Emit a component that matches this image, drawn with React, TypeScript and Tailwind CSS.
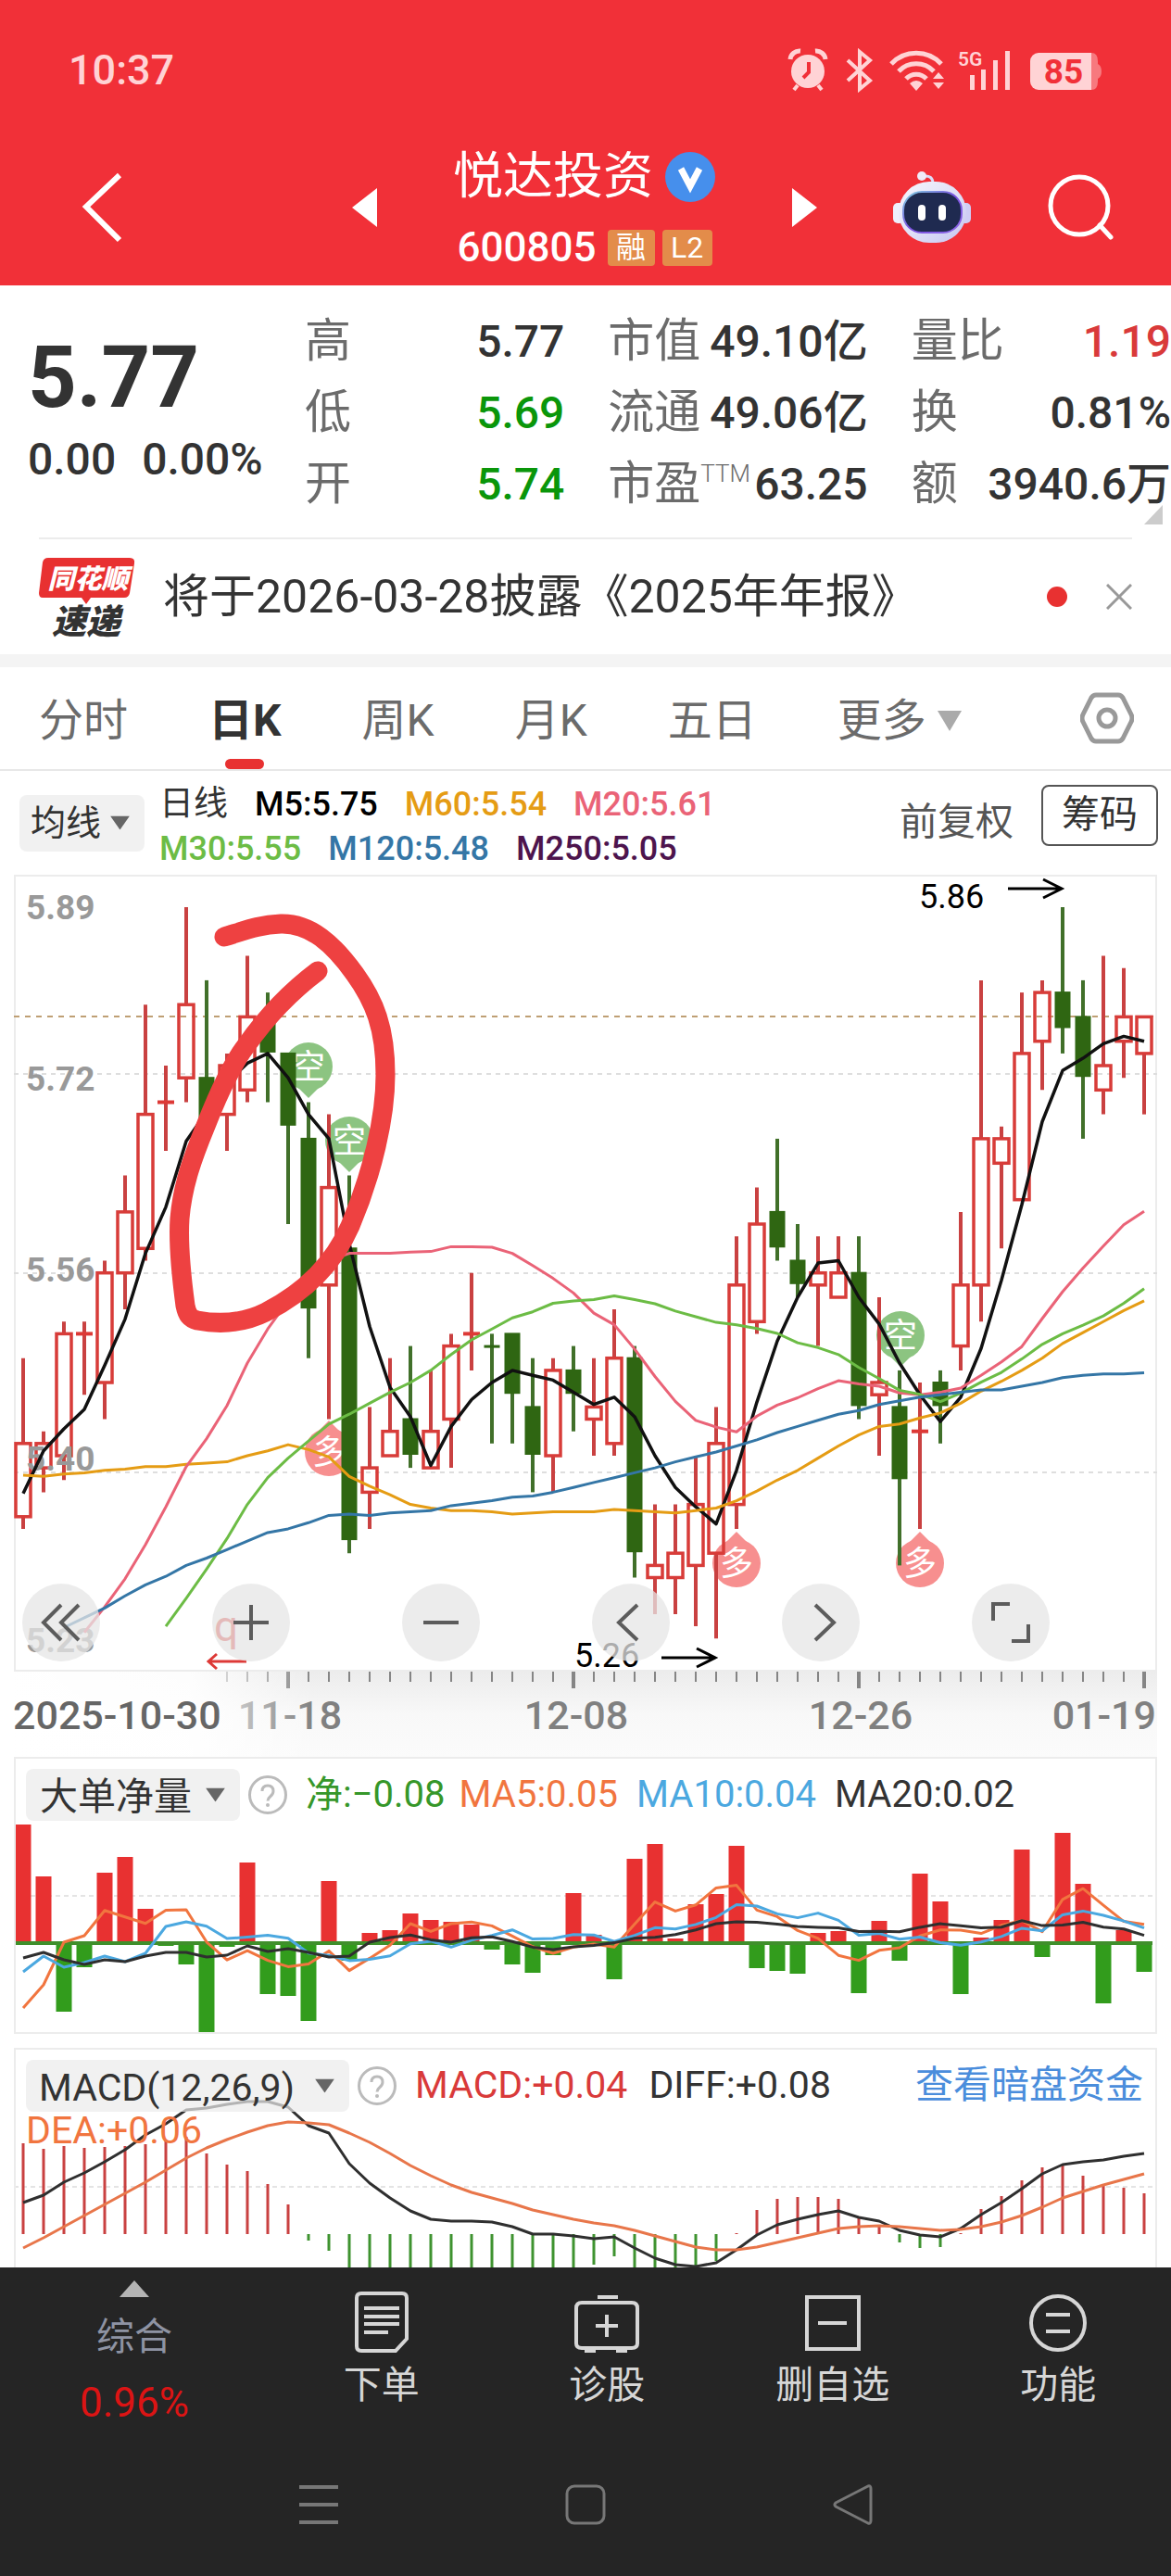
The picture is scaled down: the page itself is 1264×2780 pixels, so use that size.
import type { ReactNode } from 'react';

type Candle = [high: number, top: number, bottom: number, low: number, dir: 'up' | 'down'];

const STEP = 22;
const FIRST_X = 25;
const xAt = (i: number) => FIRST_X + i * STEP;

// Levels are counted in cents below 5.86, the highest price on the chart
const priceY = (level: number) => Math.round((35 + level * 13.155) * 10) / 10;

const candles: Candle[] = [
  [37, 44, 50, 51, 'up'], [43, 44, 46, 48, 'up'], [34, 35, 45, 47, 'up'], [34, 35, 35, 40, 'up'],
  [29, 30, 39, 42, 'up'], [22, 25, 30, 33, 'up'], [8, 17, 28, 29, 'up'], [13, 16, 16, 20, 'up'],
  [0, 8, 14, 16, 'up'], [6, 14, 18, 18, 'down'], [12, 13, 17, 20, 'up'], [4, 9, 15, 16, 'up'],
  [7, 9, 12, 16, 'down'], [12, 12, 18, 26, 'down'], [16, 19, 33, 37, 'down'], [17, 23, 31, 42, 'up'],
  [22, 28, 52, 53, 'down'], [41, 46, 48, 51, 'up'], [37, 43, 45, 45, 'up'], [36, 42, 45, 46, 'down'],
  [38, 43, 46, 46, 'up'], [35, 36, 42, 46, 'up'], [30, 35, 35, 38, 'up'], [35, 36, 36, 44, 'down'],
  [35, 35, 40, 44, 'down'], [37, 41, 45, 48, 'down'], [37, 38, 45, 48, 'up'], [36, 38, 40, 43, 'down'],
  [37, 41, 42, 45, 'up'], [33, 37, 44, 45, 'up'], [36, 37, 53, 55, 'down'], [49, 54, 55, 58, 'up'],
  [49, 53, 55, 58, 'up'], [45, 49, 54, 59, 'up'], [41, 44, 53, 60, 'up'], [27, 31, 49, 51, 'up'],
  [23, 26, 34, 35, 'up'], [19, 25, 28, 29, 'down'], [26, 29, 31, 32, 'down'], [27, 30, 31, 36, 'up'],
  [27, 30, 32, 32, 'up'], [27, 30, 41, 42, 'down'], [32, 39, 40, 45, 'up'], [38, 41, 47, 54, 'down'],
  [39, 43, 43, 51, 'up'], [38, 39, 41, 44, 'down'], [25, 31, 36, 38, 'up'], [6, 19, 31, 34, 'up'],
  [18, 19, 21, 28, 'up'], [7, 12, 24, 24, 'up'], [6, 7, 11, 15, 'up'], [0, 7, 10, 12, 'down'],
  [6, 9, 14, 19, 'down'], [4, 13, 15, 17, 'up'], [5, 9, 11, 14, 'up'], [9, 9, 12, 17, 'up'],
];

const closes = candles.map(([, top, bottom, , dir]) => (dir === 'up' ? top : bottom));

// seed holds the averages that need bars from before the visible range
function average(values: number[], size: number, seed: (number | null)[]) {
  return values.map((_, i) => {
    if (i < size - 1) return seed[i] ?? null;
    const part = values.slice(i - size + 1, i + 1);
    return part.reduce((a, b) => a + b, 0) / size;
  });
}

const ma5 = average(closes, 5, [48.1, 44.6, 42.8, 41.2]);
const ma20 = average(closes, 20, [
  null, null, null, 59.5, 57.4, 55.1, 52.3, 49.2, 45.9, 43.6, 40.9, 37.4, 34.6, 32.3, 31, 29, 28.4, 28.4, 28.4,
]);
const ma30 = average(closes, 30, [
  null, null, null, null, null, null, null, 59, 56.7, 54.3, 51.8, 49, 46.8, 45.2, 43.8, 42.4, 41.6, 40.7, 39.8,
  39, 38, 36.7, 35.5, 34.6, 33.7, 33.2, 32.5, 32.3, 32.2,
]);
const ma60 = [
  46.6, 46.7, 46.5, 46.4, 46.2, 46.1, 45.9, 45.9, 45.7, 45.6, 45.5, 45, 44.6, 44.1, 44.5, 45.1, 46.7, 47.5, 48.2,
  49, 49.3, 49.5, 49.5, 49.6, 49.8, 49.7, 49.6, 49.6, 49.6, 49.4, 49.5, 49.6, 49.7, 49.5, 49.3, 48.7, 47.9, 47,
  46.2, 45.2, 44.2, 43.3, 42.6, 42.4, 41.9, 41.5, 40.7, 39.7, 38.9, 38, 37, 35.8, 34.9, 34, 33.1, 32.3,
];
const ma120 = [
  null, null, 59.1, 58.3, 57.5, 56.5, 55.6, 54.9, 54, 53.4, 52.7, 52, 51.3, 51, 50.5, 49.9, 49.8, 49.9, 49.7,
  49.6, 49.5, 49.1, 48.9, 48.7, 48.4, 48.3, 48, 47.6, 47.2, 46.8, 46.4, 46, 45.5, 45.1, 44.7, 44.2, 43.7, 43.1,
  42.6, 42.1, 41.6, 41.3, 40.8, 40.5, 40.2, 40, 39.8, 39.6, 39.6, 39.3, 39, 38.6, 38.4, 38.3, 38.3, 38.2,
];

const net = [
  128, 72, -74, -26, 76, 93, 37, -3, -23, -98, -4, 87, -55, -57, -84, 67, -19, 11, 14, 32, 25, 23, 20, -7, -23,
  -32, -13, 54, 9, -39, 91, 107, 5, 42, 53, 105, -27, -30, -33, 11, 13, -54, 24, -19, 75, 45, -55, 6, 25, 101,
  -15, 119, 64, -65, 14, -31,
];
const net5 = average(net, 5, [-70, -45, 1, 8]);
const net10 = average(net, 10, [-31, -14, -26, -21, -14, -20, -11, 18, 23]);
const net20 = average(net, 20, [
  -16, -10, -18, -23, -18, -20, -14, -10, -10, -15, -13, -3, -9, -6, -10, -15, -14, 1, 6,
]);

const macd = [
  98, 92, 95, 93, 94, 95, 97, 101, 105, 87, 75, 68, 54, 32, -7, -18, -40, -42, -44, -46, -46, -44, -44, -42, -42,
  -42, -40, -40, -33, -24, -40, -44, -44, -35, -29, 1, 26, 38, 40, 40, 38, 18, 8, -9, -15, -14, 1, 27, 41, 58, 72,
  74, 63, 53, 50, 44,
];
const diff = [
  34, 42, 56, 66, 78, 91, 107, 119, 134, 136, 140, 143, 143, 137, 117, 109, 76, 55, 39, 25, 16, 14, 14, 13, 8, 0,
  0, -2, -5, -3, -15, -26, -33, -35, -31, -17, -1, 10, 16, 21, 25, 18, 14, 4, -1, -3, 6, 21, 34, 49, 65, 75, 78,
  80, 84, 87,
];
const dea = [
  -15, -4, 8, 20, 32, 44, 56, 69, 82, 93, 102, 110, 117, 121, 120, 118, 109, 99, 87, 74, 63, 53, 45, 39, 33, 26,
  21, 16, 12, 9, 4, -2, -8, -14, -17, -17, -14, -9, -4, 1, 6, 8, 9, 8, 6, 4, 5, 8, 13, 20, 29, 39, 46, 53, 59, 65,
];

const stats = [
  [
    { label: '高', value: '5.77', color: 'text-[#333]' },
    { label: '低', value: '5.69', color: 'text-[#0a960a]' },
    { label: '开', value: '5.74', color: 'text-[#0a960a]' },
  ],
  [
    { label: '市值', value: '49.10亿', color: 'text-[#333]' },
    { label: '流通', value: '49.06亿', color: 'text-[#333]' },
    { label: '市盈', sup: 'TTM', value: '63.25', color: 'text-[#333]' },
  ],
  [
    { label: '量比', value: '1.19', color: 'text-[#d93a3a]' },
    { label: '换', value: '0.81%', color: 'text-[#333]' },
    { label: '额', value: '3940.6万', color: 'text-[#333]' },
  ],
];

function Line({ values, y, color, width = 3 }: {
  values: (number | null)[];
  y: (v: number) => number;
  color: string;
  width?: number;
}) {
  const points = values
    .map((v, i) => (v === null ? null : `${xAt(i)},${y(v).toFixed(1)}`))
    .filter(Boolean)
    .join(' ');
  return <polyline points={points} fill="none" stroke={color} strokeWidth={width} strokeLinejoin="round" />;
}

function Marker({ x, y, kind }: { x: number; y: number; kind: '空' | '多' }) {
  const color = kind === '空' ? '#8cc481' : '#f78f8f';
  const tip = kind === '空' ? `M${x - 14} ${y + 20}L${x} ${y + 34}L${x + 14} ${y + 20}Z` : `M${x - 14} ${y - 20}L${x} ${y - 34}L${x + 14} ${y - 20}Z`;
  return (
    <g>
      <circle cx={x} cy={y} r={26} fill={color} />
      <path d={tip} fill={color} />
      <text x={x} y={y + 13} textAnchor="middle" fontSize={36} fill="#fff">{kind}</text>
    </g>
  );
}

function StatusIcons() {
  return (
    <svg className="w-[340px] h-[48px]" viewBox="850 52 340 48" fill="#ffd3d5">
      <circle cx="872" cy="77" r="18" />
      <path d="M853 64a10 10 0 0 1 11-9M891 64a10 10 0 0 0-11-9" stroke="#ffd3d5" strokeWidth="5" fill="none" />
      <path d="M861 92l-4 5M883 92l4 5" stroke="#ffd3d5" strokeWidth="4" />
      <path d="M873 67v11l-6 6" stroke="#f13038" strokeWidth="4" fill="none" />
      <path d="M915 65l24 22-11 9V56l11 9-24 22" stroke="#ffd3d5" strokeWidth="4" fill="none" />
      <g fill="none" stroke="#ffd3d5" strokeWidth="5">
        <path d="M962 69a37 37 0 0 1 54 0" />
        <path d="M970 77a26 26 0 0 1 38 0" />
        <path d="M978 85a15 15 0 0 1 22 0" />
      </g>
      <path d="M982 90q7-6 14 0l-7 8zM1007 85l6-7 6 7zM1007 89l6 7 6-7z" />
      <text x="1034" y="71" fontSize="21" fontWeight="600">5G</text>
      <path d="M1047 81h5v16h-5zM1059 75h5v22h-5zM1072 65h5v32h-5zM1085 55h5v42h-5z" />
      <path d="M1121 57h57v40h-57a9 9 0 0 1-9-9V66a9 9 0 0 1 9-9z" />
      <path d="M1178 57q7 0 7 9v3q4 2 4 8t-4 8v3q0 9-7 9z" opacity=".45" />
      <text x="1148" y="90" fontSize="37" fontWeight="700" textAnchor="middle" fill="#f13038">85</text>
    </svg>
  );
}

function Robot() {
  return (
    <svg className="w-[84px] h-[78px]" viewBox="0 0 84 78">
      <defs>
        <linearGradient id="shell" x1="0" y1="0" x2="1" y2="1">
          <stop offset="0" stopColor="#f7f7fe" />
          <stop offset=".6" stopColor="#dcdcf6" />
          <stop offset="1" stopColor="#c6c4f0" />
        </linearGradient>
        <linearGradient id="rim" x1="0" y1="0" x2="1" y2="1">
          <stop offset="0" stopColor="#7fd3e0" />
          <stop offset=".5" stopColor="#7a4fe0" />
          <stop offset="1" stopColor="#8f6ae8" />
        </linearGradient>
      </defs>
      <path d="M43 13Q43 4 33 5" stroke="#dcdcf8" strokeWidth="3" fill="none" />
      <circle cx="31" cy="5" r="5" fill="#f0ebf8" />
      <rect x="0" y="34" width="12" height="22" rx="5" fill="#eeeffc" />
      <rect x="72" y="34" width="12" height="22" rx="5" fill="#cfcdf5" />
      <rect x="6" y="11" width="73" height="66" rx="33" fill="url(#shell)" />
      <rect x="11" y="22" width="63" height="44" rx="20" fill="#1f2a50" stroke="url(#rim)" strokeWidth="2" />
      <rect x="27" y="36" width="8" height="17" rx="4" fill="#fff" />
      <rect x="49" y="36" width="8" height="17" rx="4" fill="#fff" />
    </svg>
  );
}

function Header() {
  return (
    <header className="bg-[#f13038] text-white pb-3">
      <div className="flex items-center justify-between h-[152px] pl-[74px] pr-[74px]">
        <span className="text-[45px] font-medium text-[#ffd3d5]">10:37</span>
        <StatusIcons />
      </div>
      <div className="flex items-center gap-[82px] h-[144px] pl-[88px] pr-[62px]">
        <button aria-label="返回" className="mr-auto">
          <svg className="w-[44px] h-[76px]" viewBox="0 0 44 76">
            <path d="M41 3L5 37l36 36" fill="none" stroke="#fff" strokeWidth="6" />
          </svg>
        </button>
        <button aria-label="上一只">
          <svg className="w-[27px] h-[42px]" viewBox="0 0 27 42"><path d="M27 0v42L0 21z" fill="#fff" /></svg>
        </button>
        <div className="flex flex-col gap-5 pt-[10px]">
          <div className="flex items-center gap-3 h-14">
            <h1 className="text-[54px] leading-[56px]">悦达投资</h1>
            <svg className="w-[56px] h-[56px]" viewBox="0 0 56 56">
              <circle cx="28" cy="28" r="27" fill="#468fec" />
              <path d="M18 19l10 19 10-19" fill="none" stroke="#fff" strokeWidth="7" />
            </svg>
          </div>
          <div className="flex items-center justify-center gap-2 h-14">
            <span className="text-[44px] font-medium mr-1">600805</span>
            <span className="bg-[#e38c4a] rounded-sm w-[51px] h-[39px] text-[32px] leading-[39px] text-center">融</span>
            <span className="bg-[#e38c4a] rounded-sm w-[54px] h-[39px] text-[32px] leading-[39px] text-center">L2</span>
          </div>
        </div>
        <button aria-label="下一只">
          <svg className="w-[27px] h-[42px]" viewBox="0 0 27 42"><path d="M0 0v42l27-21z" fill="#fff" /></svg>
        </button>
        <button aria-label="智能助手"><Robot /></button>
        <button aria-label="搜索">
          <svg className="w-[72px] h-[72px]" viewBox="0 0 72 72" fill="none" stroke="#fff" strokeWidth="5">
            <circle cx="35" cy="34" r="31" />
            <path d="M57 55l12 13" strokeLinecap="round" />
          </svg>
        </button>
      </div>
    </header>
  );
}

function Quote() {
  return (
    <section className="relative grid grid-cols-[252px_1fr_1fr_1fr] gap-x-[47px] pl-[30px] h-[272px] pt-[22px] text-[48px]">
      <div className="text-[#333]">
        <div className="text-[92px] leading-[100px] font-bold pt-[28px]">5.77</div>
        <div className="flex gap-[28px] font-medium leading-[76px]">
          <span>0.00</span>
          <span>0.00%</span>
        </div>
      </div>
      {stats.map((col, i) => (
        <dl key={i}>
          {col.map((row) => (
            <div key={row.label} className="flex justify-between h-[77px] leading-[77px] whitespace-nowrap">
              <dt className="text-[50px] text-[#6b6b6b] flex">
                {row.label}
                {'sup' in row && <span className="text-[26px] font-light leading-[54px]">{row.sup}</span>}
              </dt>
              <dd className={`font-medium ${row.color}`}>{row.value}</dd>
            </div>
          ))}
        </dl>
      ))}
      <svg className="absolute right-[9px] bottom-[14px] w-[20px] h-[21px]" viewBox="0 0 20 21">
        <path d="M20 0v21H0z" fill="#ccc" />
      </svg>
    </section>
  );
}

function News() {
  return (
    <section className="mx-[42px] h-[126px] border-t-2 border-[#ececec] flex items-center text-[#333]">
      <svg className="w-[104px] h-[88px] shrink-0 overflow-visible" viewBox="0 0 104 88" fontWeight="900">
        <path d="M10 2h88q6 0 5 6l-5 32q-1 5-6 5H56l-5 7-5-7H4q-4 0-4-5l4-33q1-5 6-5z" fill="#e83131" />
        <text x="53" y="35" fontSize="29" fill="#fff" textAnchor="middle" fontStyle="italic">同花顺</text>
        <text x="51" y="84" fontSize="37" fill="#333" textAnchor="middle" fontStyle="italic">速递</text>
      </svg>
      <a href="#news" className="ml-[30px] text-[50px] whitespace-nowrap">将于2026-03-28披露《2025年年报》</a>
      <span className="ml-auto w-[22px] h-[22px] rounded-full bg-[#e83131]" />
      <button aria-label="关闭" className="ml-[42px]">
        <svg className="w-[28px] h-[28px]" viewBox="0 0 28 28">
          <path d="M1 1l26 26M27 1L1 27" stroke="#999" strokeWidth="3" />
        </svg>
      </button>
    </section>
  );
}

function Tabs() {
  const tabs = ['分时', '日K', '周K', '月K', '五日'];
  return (
    <nav className="flex items-stretch gap-[87px] h-[112px] pl-[42px] pr-[40px] border-b-2 border-[#e8e8e8] text-[48px] text-[#6b6b6b]">
      {tabs.map((tab) => (
        <button key={tab} className={tab === '日K' ? 'relative pt-[6px] font-bold text-[#333]' : 'relative pt-[6px]'}>
          {tab}
          {tab === '日K' && (
            <span className="absolute bottom-0 left-1/2 -translate-x-1/2 w-[42px] h-[11px] rounded-full bg-[#e83131]" />
          )}
        </button>
      ))}
      <button className="flex items-center gap-3 pt-[6px]">
        更多
        <svg className="w-[26px] h-[22px]" viewBox="0 0 26 22"><path d="M0 0h26L13 22z" fill="#aaa" /></svg>
      </button>
      <button aria-label="设置" className="ml-auto">
        <svg className="w-[58px] h-[56px]" viewBox="0 0 58 56" fill="none" stroke="#999" strokeWidth="5">
          <path d="M17 3h24q3 0 5 3l9 18q2 4 0 8l-9 18q-2 3-5 3H17q-3 0-5-3L3 32q-2-4 0-8l9-18q2-3 5-3z" />
          <circle cx="29" cy="28" r="9" />
        </svg>
      </button>
    </nav>
  );
}

function Picker({ name, value, className }: { name: string; value: string; className: string }) {
  return (
    <label className="relative block">
      <span className="sr-only">{name}</span>
      <select className={`block appearance-none rounded-lg bg-[#ebebeb]/70 text-[#333] ${className}`} defaultValue={value}>
        <option>{value}</option>
      </select>
      <svg className="absolute right-[16px] top-1/2 -translate-y-1/2 w-[21px] h-[15px] pointer-events-none" viewBox="0 0 21 15">
        <path d="M0 0h21L10.500 15z" fill="#666" />
      </svg>
    </label>
  );
}

function Legend() {
  return (
    <section className="flex items-center h-[112px] pl-[21px] pr-[14px] text-[36px] font-medium">
      <Picker name="指标" value="均线" className="w-[135px] h-[61px] pl-[12px] text-[38px] leading-[60px] font-normal" />
      <div className="ml-[16px] pt-[8px] leading-[48px] whitespace-nowrap">
        <div className="flex gap-[29px]">
          <span className="text-[#333] text-[37px] font-normal">日线</span>
          <span className="text-black">M5:5.75</span>
          <span className="text-[#e59c14]">M60:5.54</span>
          <span className="text-[#ea6377]">M20:5.61</span>
        </div>
        <div className="flex gap-[29px]">
          <span className="text-[#6cbc45]">M30:5.55</span>
          <span className="text-[#3476a6]">M120:5.48</span>
          <span className="text-[#4d144d]">M250:5.05</span>
        </div>
      </div>
      <button className="ml-auto text-[41px] font-normal text-[#555]">前复权</button>
      <button className="ml-[30px] mb-[16px] w-[126px] h-[66px] border-2 border-[#555] rounded-lg text-[41px] font-normal text-[#333]">筹码</button>
    </section>
  );
}

function CandleShape({ i, candle }: { i: number; candle: Candle }) {
  const [high, top, bottom, low, dir] = candle;
  const x = xAt(i);
  const [h, t, b, l] = [high, top, bottom, low].map(priceY);
  if (dir === 'down') {
    return (
      <g>
        <path d={`M${x} ${h}V${l}`} stroke="#41702a" strokeWidth="4" />
        <rect x={x - 8.5} y={t - 1} width="17" height={Math.max(b - t, 3)} fill="#2f6612" />
      </g>
    );
  }
  return (
    <g stroke="#c94141" strokeWidth="4" fill="none">
      <path d={`M${x} ${h}V${t}M${x} ${b}V${l}`} />
      {top === bottom ? (
        <path d={`M${x - 9} ${t}H${x + 9}`} stroke="#dd3936" />
      ) : (
        <rect x={x - 8} y={t} width="16" height={b - t} stroke="#d83c39" strokeWidth="3.500" />
      )}
    </g>
  );
}

function RoundButton({ label, children }: { label: string; children: ReactNode }) {
  return (
    <button aria-label={label} className="w-[84px] h-[84px] rounded-full bg-[#e6e6e6]/75 flex items-center justify-center">
      <svg className="w-[44px] h-[44px]" viewBox="0 0 44 44" fill="none" stroke="#5c5c5c" strokeWidth="4">
        {children}
      </svg>
    </button>
  );
}

function PriceChart() {
  return (
    <section className="relative mx-[15px] border-2 border-[#ececec]">
      <svg className="block w-full overflow-visible" viewBox="17 2 1230 856">
        <g stroke="#dedede" strokeWidth="2" strokeDasharray="5 5">
          <path d="M15 215H1249M15 430H1249M15 645H1249" />
        </g>
        <path d="M15 153H1249" stroke="#bf9f74" strokeWidth="2" strokeDasharray="6 6" />
        <Marker x={333} y={207} kind="空" />
        <Marker x={377} y={287} kind="空" />
        <Marker x={972} y={497} kind="空" />
        <Marker x={355} y={623} kind="多" />
        <Marker x={795} y={743} kind="多" />
        <Marker x={993} y={743} kind="多" />
        {candles.map((candle, i) => (
          <CandleShape key={i} i={i} candle={candle} />
        ))}
        <g fontSize="37" fontWeight="700" fill="#999">
          <text x="28" y="48">5.89</text>
          <text x="28" y="233">5.72</text>
          <text x="28" y="439">5.56</text>
          <text x="28" y="643">5.40</text>
          <text x="28" y="839">5.23</text>
        </g>
        <Line values={ma5} y={priceY} color="#111" width={3.5} />
        <Line values={ma60} y={priceY} color="#e59c14" />
        <Line values={ma20} y={priceY} color="#ea6377" />
        <Line values={ma30} y={priceY} color="#6cbc45" />
        <Line values={ma120} y={priceY} color="#3476a6" />
        <g fontSize="36" fill="#000">
          <text x="992" y="36">5.86</text>
          <text x="620" y="855">5.26</text>
        </g>
        <g fill="none" stroke="#000" strokeWidth="3">
          <path d="M1088 15H1146M1126 5L1146 15 1126 25" />
          <path d="M714 845H772M752 835L772 845 752 855" />
        </g>
        <text x="231" y="827" fontSize="46" fill="#dd3936">q</text>
        <path d="M266 849H225M234 841L225 849 234 857" fill="none" stroke="#dd3936" strokeWidth="3" />
        <path
          d="M242 67C265 60 280 54 303 53C335 52 360 75 383 107C404 136 416 165 416 216C416 262 402 322 378 379C360 420 330 450 287 472C265 483 240 486 213 481C205 479 202 475 200 465C196 435 192 400 194 371C197 335 208 305 222 271C235 238 250 205 266 184C290 150 315 125 343 104"
          fill="none" stroke="#ee4141" strokeWidth="21" strokeLinecap="round" strokeLinejoin="round"
        />
      </svg>
      <div className="absolute bottom-[9px] left-[7px] flex gap-[121px]">
        <RoundButton label="最早"><path d="M22 3L3 22l19 19M41 3L22 22l19 19" /></RoundButton>
        <RoundButton label="放大"><path d="M3 22H41M22 3V41" /></RoundButton>
        <RoundButton label="缩小"><path d="M3 22H41" /></RoundButton>
        <RoundButton label="左移"><path d="M29 3L9 22l20 19" /></RoundButton>
        <RoundButton label="右移"><path d="M16 3l20 19-20 19" /></RoundButton>
        <RoundButton label="全屏"><path d="M3 20V2H21M23 42H41V24" /></RoundButton>
      </div>
    </section>
  );
}

function TimeAxis() {
  const ticks = Array.from({ length: 46 }, (_, k) => k + 10);
  return (
    <svg className="block w-full" viewBox="0 0 1264 92">
      <defs>
        <linearGradient id="axisShade" x1="0" y1="0" x2="0" y2="1">
          <stop offset="0" stopColor="#ececec" />
          <stop offset=".5" stopColor="#f8f8f8" />
          <stop offset="1" stopColor="#fbfbfb" />
        </linearGradient>
        <linearGradient id="axisFade" x1="0" y1="0" x2="1" y2="0">
          <stop offset="0" stopColor="#fff" />
          <stop offset=".6" stopColor="#fff" stopOpacity=".9" />
          <stop offset="1" stopColor="#fff" stopOpacity="0" />
        </linearGradient>
      </defs>
      <rect x="15" width="1234" height="92" fill="url(#axisShade)" />
      {ticks.map((i) => {
        const major = i % 14 === 13;
        return <rect key={i} x={xAt(i) - (major ? 2 : 1)} y="0" width={major ? 4 : 2} height={major ? 18 : 11} fill="#858585" />;
      })}
      <g fontSize="43" fontWeight="500" fill="#808080">
        <text x="313" y="62" textAnchor="middle">11-18</text>
        <text x="622" y="62" textAnchor="middle">12-08</text>
        <text x="929" y="62" textAnchor="middle">12-26</text>
        <text x="1248" y="62" textAnchor="end">01-19</text>
        <rect width="340" height="92" fill="url(#axisFade)" />
        <text x="14" y="62" fill="#666">2025-10-30</text>
      </g>
    </svg>
  );
}

function Help() {
  return (
    <button aria-label="说明">
      <svg className="w-[42px] h-[42px]" viewBox="0 0 42 42">
        <circle cx="21" cy="21" r="19.500" fill="none" stroke="#bbb" strokeWidth="3" />
        <path d="M15 17q0-6 6-6t6 6q0 3-3 5.500t-3 5" fill="none" stroke="#bbb" strokeWidth="3" />
        <circle cx="21" cy="32" r="2" fill="#bbb" />
      </svg>
    </button>
  );
}

function NetPanel() {
  const y = (v: number) => 201 - v;
  return (
    <section className="relative mx-[15px] border-2 border-[#ececec]">
      <svg className="block w-full" viewBox="17 2 1230 295">
        <path d="M15 150H1249" stroke="#dcdcdc" strokeWidth="1.500" strokeDasharray="5 4" />
        {net.map((v, i) => (
          <rect key={i} x={xAt(i) - 8.5} y={v > 0 ? y(v) : 201} width="17" height={Math.abs(v)} fill={v > 0 ? '#e83131' : '#329c1c'} />
        ))}
        <path d="M15 201H1244" stroke="#3f8f2b" strokeWidth="4" />
        <Line values={net5} y={y} color="#f1753f" />
        <Line values={net10} y={y} color="#4ba8e0" />
        <Line values={net20} y={y} color="#2f2f2f" />
      </svg>
      <div className="absolute top-[11px] left-[11px] flex items-center h-14 text-[40px] whitespace-nowrap">
        <Picker name="副图指标" value="大单净量" className="w-[231px] h-[56px] pl-[15px] text-[41px] leading-[60px]" />
        <div className="flex ml-[9px]"><Help /></div>
        <span className="ml-[20px] text-[#36972a]">净:−0.08</span>
        <span className="ml-[15px] text-[#f1753f]">MA5:0.05</span>
        <span className="ml-[20px] text-[#4ba8e0]">MA10:0.04</span>
        <span className="ml-[20px] text-[#333]">MA20:0.02</span>
      </div>
    </section>
  );
}

function MacdPanel() {
  const y = (v: number) => 201 - v;
  return (
    <section className="relative mx-[15px] mt-[15px] border-2 border-b-0 border-[#ececec]">
      <svg className="block w-full" viewBox="17 2 1230 235">
        <path d="M15 150H1249" stroke="#dcdcdc" strokeWidth="1.500" strokeDasharray="5 4" />
        {macd.map((v, i) => (
          <rect key={i} x={xAt(i) - 1.5} y={v > 0 ? y(v) : 201} width="3" height={Math.abs(v)} fill={v > 0 ? '#c94141' : '#3f9330'} />
        ))}
        <Line values={diff} y={y} color="#2f2f2f" />
        <Line values={dea} y={y} color="#e8764a" />
      </svg>
      <div className="absolute top-[11px] left-[11px] right-[13px] text-[41px] whitespace-nowrap">
        <div className="flex items-center h-14">
          <Picker name="副图指标" value="MACD(12,26,9)" className="w-[349px] h-[56px] pl-[14px] text-[41px] leading-[60px]" />
          <div className="flex ml-[9px]"><Help /></div>
          <span className="ml-[20px] text-[#d93a3a]">MACD:+0.04</span>
          <span className="ml-[23px] text-[#333]">DIFF:+0.08</span>
          <a href="#flow" className="ml-auto text-[#4a8ddc]">查看暗盘资金</a>
        </div>
        <div className="leading-[40px] text-[#f1753f]">DEA:+0.06</div>
      </div>
    </section>
  );
}

function FooterItem({ label, dot, children }: { label: string; dot?: boolean; children: ReactNode }) {
  return (
    <button className="flex-1 flex flex-col items-center text-[41px] text-[#d6d6d6]">
      <span className="relative mt-[24px]">
        <svg className="w-[70px] h-[70px]" viewBox="0 0 70 70" fill="none" stroke="#d6d6d6" strokeWidth="4">
          {children}
        </svg>
        {dot && <span className="absolute -right-[25px] top-[4px] w-[21px] h-[21px] rounded-full bg-[#e83131]" />}
      </span>
      <span className="leading-[66px]">{label}</span>
    </button>
  );
}

function Footer() {
  return (
    <footer className="bg-[#252525]">
      <div className="flex items-start h-[180px]">
        <button className="w-[290px] flex flex-col items-center text-[41px] text-[#8e93a3]">
          <svg className="w-[32px] h-[18px] mt-[14px]" viewBox="0 0 32 18"><path d="M0 18h32L16 0z" fill="#b4b4b4" /></svg>
          <span className="leading-[60px] mt-[13px]">综合</span>
          <span className="leading-[60px] mt-[11px] text-[44px] text-[#dc1414]">0.96%</span>
        </button>
        <FooterItem label="下单">
          <path d="M13 4h44q5 0 5 5v44L50 66H13q-5 0-5-5V9q0-5 5-5zM16 20h38M16 29h38M16 37h38M16 46h26" />
        </FooterItem>
        <FooterItem label="诊股">
          <path d="M25 8h22M8 14h54q6 0 6 6v38q0 5-6 5H8q-6 0-6-5V20q0-6 6-6zM11 66h12M45 66h12M35 27v24M23 39h24" />
        </FooterItem>
        <FooterItem label="删自选">
          <path d="M7 8h56v56H7zM19 36h31" />
        </FooterItem>
        <FooterItem label="功能">
          <circle cx="35" cy="36" r="29" />
          <path d="M22 27h26M22 45h26" />
        </FooterItem>
      </div>
      <div className="flex justify-center gap-[244px] h-[153px] pt-[54px]">
        <button aria-label="菜单" className="h-[44px]">
          <svg className="w-[44px] h-[44px]" viewBox="0 0 44 44" stroke="#777" strokeWidth="4">
            <path d="M1 3H43M1 22H43M1 41H43" />
          </svg>
        </button>
        <button aria-label="主页" className="h-[44px]">
          <svg className="w-[44px] h-[44px]" viewBox="0 0 44 44" fill="none" stroke="#777" strokeWidth="3">
            <rect x="2" y="2" width="40" height="40" rx="8" />
          </svg>
        </button>
        <button aria-label="后退" className="h-[44px]">
          <svg className="w-[44px] h-[44px]" viewBox="0 0 44 44" fill="none" stroke="#777" strokeWidth="3" strokeLinejoin="round">
            <path d="M39 2Q42 1 42 5V39Q42 43 39 42L4 24Q2 22 4 20Z" />
          </svg>
        </button>
      </div>
    </footer>
  );
}

export default function App() {
  return (
    <div className="bg-white font-['Roboto','Noto_Sans_CJK_SC',sans-serif] overflow-x-hidden">
      <Header />
      <Quote />
      <News />
      <div className="h-[14px] bg-[#f4f4f4]" />
      <Tabs />
      <Legend />
      <PriceChart />
      <TimeAxis />
      <NetPanel />
      <MacdPanel />
      <Footer />
    </div>
  );
}
